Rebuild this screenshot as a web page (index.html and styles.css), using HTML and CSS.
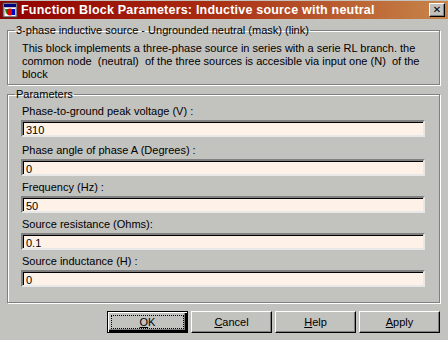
FILE: index.html
```html
<!DOCTYPE html>
<html lang="en">
<head>
  <meta charset="UTF-8" />
  <title>Function Block Parameters: Inductive source with neutral</title>
  <link rel="stylesheet" href="styles.css">
</head>
<body>
  <div class="dialog">
    <div class="titlebar">
      <svg class="appicon" width="16" height="16" viewBox="0 0 16 16">
        <rect x="1" y="1" width="14" height="14" fill="#c0c0c0" stroke="#404040"/>
        <rect x="2" y="2" width="12" height="3" fill="#000080"/>
        <rect x="3" y="6" width="10" height="8" fill="#ffffff"/>
        <path d="M3 7 L8 7 L4 12 Z" fill="#00a000"/>
        <circle cx="8" cy="10" r="3.4" fill="#e00000"/>
        <rect x="10" y="7" width="3" height="6" fill="#0000c0"/>
      </svg>
      <span class="title">Function Block Parameters: Inductive source with neutral</span>
      <button class="close">&#x2715;</button>
    </div>

    <fieldset class="group desc">
      <legend>3-phase inductive source - Ungrounded neutral (mask) (link)</legend>
      <p>This block implements a three-phase source in series with a serie RL branch. the common node&nbsp; (neutral)&nbsp; of the three sources is accesible via input one (N)&nbsp; of the block</p>
    </fieldset>

    <fieldset class="group params">
      <legend>Parameters</legend>
      <label>Phase-to-ground peak voltage (V) :</label>
      <div class="field">310</div>
      <label class="gap">Phase angle of phase A (Degrees) :</label>
      <div class="field">0</div>
      <label>Frequency (Hz) :</label>
      <div class="field">50</div>
      <label>Source resistance (Ohms):</label>
      <div class="field">0.1</div>
      <label>Source inductance (H) :</label>
      <div class="field">0</div>
    </fieldset>

    <div class="buttons">
      <button class="btn default"><u>O</u>K</button>
      <button class="btn"><u>C</u>ancel</button>
      <button class="btn"><u>H</u>elp</button>
      <button class="btn"><u>A</u>pply</button>
    </div>
  </div>
</body>
</html>
```
FILE: styles.css
```css
body { margin: 0; background: #c2c2bf; font-family: "Liberation Sans", Arial, sans-serif; font-size: 11px; color: #000; }
.dialog { width: 448px; height: 340px; overflow: hidden; }
.titlebar { height: 18px; margin-top: 1px; display: flex; align-items: center; padding: 0 2px 0 2px; background: linear-gradient(to right, #900000, #a82a10 45%, #c8864a); }
.appicon { flex: none; margin-right: 3px; }
.title { flex: 1; color: #fff; font-weight: bold; font-size: 12.5px; letter-spacing: 0.2px; white-space: nowrap; }
.close { width: 16px; height: 14px; padding: 0; margin-right: 1px; background: #c0c0c0; border: 1px solid; border-color: #fff #000 #000 #fff; box-shadow: inset -1px -1px #808080; font-size: 10px; font-weight: bold; line-height: 12px; font-family: "DejaVu Sans", sans-serif; }
.group { margin: 0 8px 0 7px; padding: 0 14px 0 13px; border: 1px solid #808080; box-shadow: inset 1px 1px #fff, 1px 1px #fff; }
.group legend { padding: 0 1px; margin-left: -6px; line-height: 13px; }
.desc { margin-top: 5px; height: 59px; }
.desc p { margin: 5px 0 0 1px; line-height: 13px; }
.params { margin-top: 3px; height: 213px; }
.params label { display: block; line-height: 13px; margin-top: 5px; margin-left: 1px; }
.params legend + label { margin-top: 4px; }
.params label.gap { margin-top: 7px; }
.field { height: 17px; margin-top: 2px; background: #fdf1e8; border: 2px solid; border-color: #808080 #e8e8e8 #e8e8e8 #808080; box-shadow: inset 1px 1px #000; box-sizing: border-box; padding: 2px 0 0 3px; line-height: 13px; }
.buttons { display: flex; justify-content: flex-end; gap: 3px; margin: 8px 8px 0 0; }
.btn { width: 81px; height: 22px; padding: 0; font: inherit; background: #c2c2bf; border: 1px solid; border-color: #fff #000 #000 #fff; box-shadow: inset -1px -1px #808080; }
.btn.default { border: 1px solid #000; box-shadow: inset 1px 1px #fff, inset -2px -2px #000, inset -3px -3px #808080; outline: 1px dotted #000; outline-offset: -5px; }
```
